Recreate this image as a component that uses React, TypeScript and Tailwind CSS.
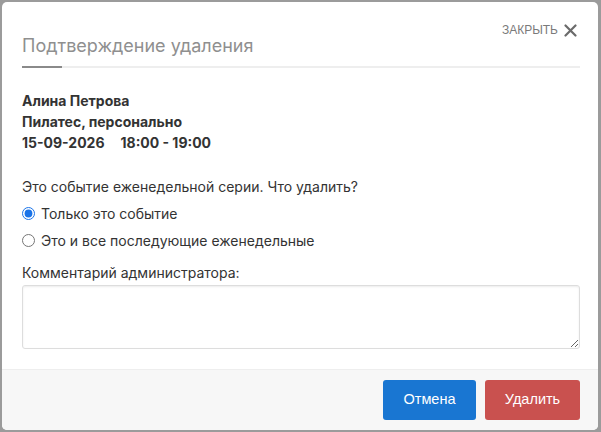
import { useState } from 'react'

const OPTIONS = [
  { id: 'one', label: 'Только это событие' },
  { id: 'all', label: 'Это и все последующие еженедельные' },
]

export default function App() {
  const [scope, setScope] = useState('one')
  const [comment, setComment] = useState('')

  return (
    <div className="w-[601px] h-[432px] bg-[#9b9b9b] p-[2px] pr-[3px]">
      <div
        className="h-full bg-white rounded-[5px] flex flex-col overflow-hidden text-[#333]"
        style={{ fontFamily: 'Inter, "Noto Sans", sans-serif' }}
      >
        {/* Header */}
        <div className="pt-[18px] pl-[20px] pr-[18px]">
          <div className="flex items-start justify-between">
            <h1 className="mt-[14px] text-[18px] leading-6 font-normal text-[#8f8f8f]">
              Подтверждение удаления
            </h1>
            <button
              className="flex items-center gap-[6px] h-5 text-[12px] text-[#7a7a7a]"
              style={{ fontFamily: '"Liberation Sans", Arial, sans-serif' }}
            >
              ЗАКРЫТЬ
              <svg width="13" height="13" viewBox="0 0 13 13" className="mr-[3px]">
                <path d="M1.5 1.5 L11.5 11.5 M11.5 1.5 L1.5 11.5" stroke="#6b6b6b" strokeWidth="2.2" strokeLinecap="round" />
              </svg>
            </button>
          </div>
          <div className="mt-[8px] flex h-[2px]">
            <div className="w-10 bg-[#8a8a8a]" />
            <div className="flex-1 bg-[#eeeeee]" />
          </div>
        </div>

        {/* Body */}
        <div className="pl-[20px] pr-[18px] text-[14px]">
          <div className="mt-[22px] font-bold leading-[21px] text-[#333]">
            <div>Алина Петрова</div>
            <div>Пилатес, персонально</div>
            <div>
              15-09-2026<span className="ml-[16px]">18:00 - 19:00</span>
            </div>
          </div>

          <p className="mt-[23px] leading-[21px]">Это событие еженедельной серии. Что удалить?</p>

          <div className="mt-[4px] flex flex-col gap-[3px]">
            {OPTIONS.map((o) => (
              <label key={o.id} className="h-6 flex items-center gap-[6px] cursor-pointer">
                <input
                  type="radio"
                  name="scope"
                  checked={scope === o.id}
                  onChange={() => setScope(o.id)}
                  className="m-0 w-[13px] h-[13px] accent-[#1a73e8]"
                />
                <span>{o.label}</span>
              </label>
            ))}
          </div>

          <p className="mt-[10px] leading-[21px]">Комментарий администратора:</p>
          <textarea
            value={comment}
            onChange={(e) => setComment(e.target.value)}
            className="mt-[2px] block w-full h-16 border border-[#dddddd] rounded-[3px] shadow-[inset_0_1px_2px_rgba(0,0,0,0.08)] outline-none px-2 py-1"
          />
        </div>

        {/* Footer */}
        <div
          className="mt-auto h-[61px] bg-[#f7f7f7] border-t border-[#eeeeee] flex items-start justify-end gap-[9px] pt-[10px] pr-[18px] text-[14.5px] text-white"
          style={{ fontFamily: '"Liberation Sans", Arial, sans-serif' }}
        >
          <button className="w-[93px] h-10 rounded-[3px] bg-[#1976d2]">Отмена</button>
          <button className="w-[95px] h-10 rounded-[3px] bg-[#c9514f]">Удалить</button>
        </div>
      </div>
    </div>
  )
}
